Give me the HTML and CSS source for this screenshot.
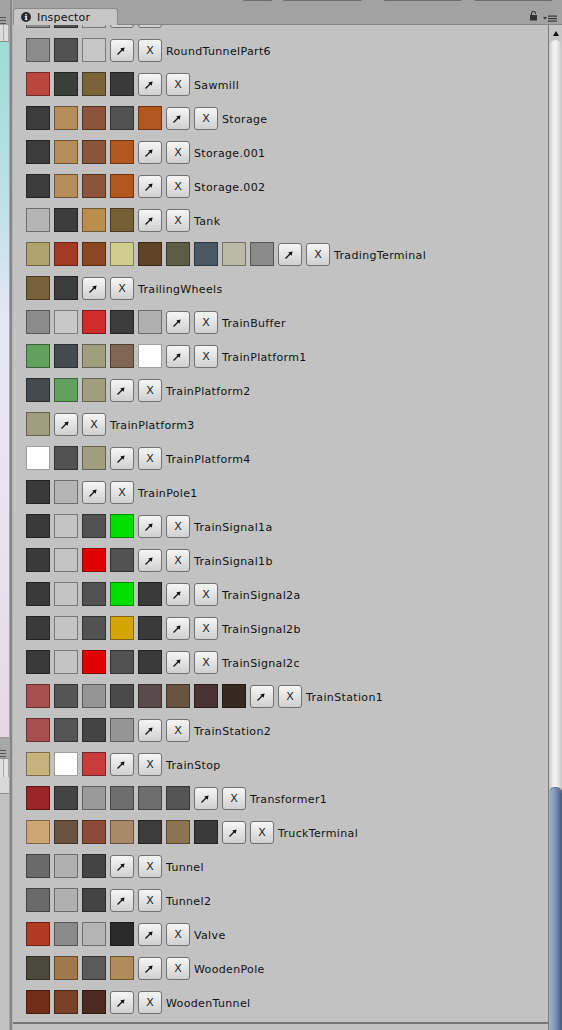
FILE: index.html
```html
<!DOCTYPE html>
<html>
<head>
<meta charset="utf-8">
<link rel="stylesheet" href="styles.css">
</head>
<body>
<div class="window">
  <div class="left-strip">
    <div class="ls-top"><span class="ls-menu"></span></div>
    <div class="ls-header"></div>
    <div class="ls-gradient"></div>
    <div class="ls-gap"><span class="ls-menu"></span></div>
    <div class="ls-header ls-header2"></div>
    <div class="ls-rest"></div>
  </div>
  <div class="separator"></div>
  <div class="right">
    <div class="topbar">
      <div class="tb-stubs">
        <span class="stub s1"></span><span class="stub s2"></span><span class="stub s3"></span><span class="stub s4"></span>
      </div>
      <div class="tab"><span class="info">i</span><span class="tab-label">Inspector</span></div>
      <div class="tb-icons">
        <svg class="lock" width="8" height="10" viewBox="0 0 8 10"><path d="M1.5 4 V2.5 A2 2 0 0 1 5.5 2.5 V3" fill="none" stroke="#333" stroke-width="1.1"/><rect x="0" y="4" width="7" height="5.5" fill="#333"/></svg>
        <svg class="menu" width="14" height="7" viewBox="0 0 14 7"><polygon points="0,2 4,2 2,4.5" fill="#333"/><rect x="5" y="0.5" width="9" height="1.2" fill="#333"/><rect x="5" y="3" width="9" height="1.2" fill="#333"/><rect x="5" y="5.5" width="9" height="1.2" fill="#333"/></svg>
      </div>
    </div>
    <div class="body-row">
      <div class="panel">
        <div class="viewport">
          <div class="list" id="list"></div>
        </div>
        <div class="footer"></div>
      </div>
      <div class="scrollbar">
        <div class="sb-up"><span class="tri"></span></div>
        <div class="sb-track"></div>
        <div class="sb-thumb"></div>
      </div>
    </div>
  </div>
</div>
<script src="app.js"></script>
</body>
</html>
```
FILE: styles.css
```css
html, body { margin: 0; padding: 0; }
body {
  width: 562px; height: 1030px; overflow: hidden;
  background: #a2a2a2;
  font-family: "DejaVu Sans", "Liberation Sans", sans-serif;
}
.window { display: flex; height: 1030px; }
.left-strip { width: 9px; display: flex; flex-direction: column; }
.ls-top { height: 25px; background: #a2a2a2; display: flex; align-items: flex-start; }
.ls-menu {
  display: block; width: 6px; height: 5px; margin-top: 17px;
  border-top: 1px solid #555; border-bottom: 1px solid #555;
  background: linear-gradient(#a2a2a2 2px, #555 2px, #555 3px, #a2a2a2 3px);
}
.ls-header {
  height: 16px; border-bottom: 1px solid #8e8e8e;
  background: linear-gradient(90deg, #dcdcdc 3px, #a8a8a8 3px, #a8a8a8 4px, #dcdcdc 4px, #dcdcdc 8px, #a8a8a8 8px);
}
.ls-gradient {
  height: 695px;
  background: linear-gradient(#9ddcd4, #c2e1e8 25%, #e6e7f4 40%, #ebe2f0 70%, #e6d7e7);
  border-bottom: 1px solid #9a9a9a;
}
.ls-gap { height: 20px; background: #a8a8a8; display: flex; }
.ls-gap .ls-menu { margin-top: 12px; background: linear-gradient(#a8a8a8 2px, #555 2px, #555 3px, #a8a8a8 3px); }
.ls-header2 {
  height: 34px; border-top: 1px solid #8a8a8a;
  background:
    linear-gradient(90deg, transparent 3px, #a8a8a8 3px, #a8a8a8 4px, transparent 4px, transparent 8px, #a8a8a8 8px) 0 0 / 9px 18px no-repeat,
    linear-gradient(#e2e2e2 0, #e2e2e2 18px, #d8d8d8 18px);
}
.ls-rest { flex: 1; background: #c2c2c2; }
.separator {
  width: 4px;
  background: linear-gradient(90deg, #a6a6a6 0, #a6a6a6 1px, #868686 1px, #868686 3px, #b4b4b4 3px);
}
.right { flex: 1; display: flex; flex-direction: column; }
.topbar {
  height: 24px; border-bottom: 1px solid #858585;
  display: flex; align-items: flex-end; justify-content: space-between;
  position: relative;
}
.tb-stubs { position: absolute; top: 0; left: 0; right: 0; height: 2px; }
.stub { position: absolute; top: 0; height: 1px; background: #6e6e6e; border-radius: 0 0 2px 2px; }
.s1 { left: 230px; width: 29px; }
.s2 { left: 270px; width: 79px; }
.s3 { left: 371px; width: 78px; }
.s4 { left: 461px; width: 78px; }
.tab {
  width: 96px; height: 16px;
  margin-bottom: -1px;
  background: #c6c6c6;
  border: 1px solid #8a8a8a; border-bottom: none;
  border-radius: 3px 3px 0 0;
  display: flex; align-items: center;
  padding-left: 7px; gap: 6px;
  position: relative;
}
.info {
  width: 10px; height: 10px; border-radius: 50%;
  background: #2b2b2b; color: #fff;
  font-size: 8px; font-weight: bold; line-height: 10px; text-align: center;
  font-family: "DejaVu Serif", serif;
}
.tab-label { font-size: 11px; color: #111; letter-spacing: 0.2px; }
.tb-icons { display: flex; align-items: flex-end; gap: 5px; margin-right: 5px; margin-bottom: 2px; }
.lock { display: block; margin-bottom: 1px; }
.menu { display: block; }
.body-row { flex: 1; display: flex; min-height: 0; }
.panel { flex: 1; display: flex; flex-direction: column; background: #c2c2c2; }
.viewport { height: 997px; overflow: hidden; }
.list { margin-top: -21px; display: flex; flex-direction: column; gap: 10px; padding-left: 13px; }
.row { display: flex; align-items: center; gap: 4px; height: 24px; }
.sw { width: 22px; height: 22px; border: 1px solid rgba(0,0,0,0.38); flex: none; }
.btn {
  width: 22px; height: 21px; flex: none;
  border: 1px solid #727272; border-radius: 3px;
  background: linear-gradient(#f6f6f6, #d0d0d0);
  display: flex; align-items: center; justify-content: center;
  font-size: 11px; color: #222;
}
.btn svg { display: block; }
.name { font-size: 11px; color: #111; padding-top: 2px; white-space: nowrap; letter-spacing: 0.35px; }
.footer { flex: 1; border-top: 2px solid #777; background: #c2c2c2; }
.scrollbar { width: 13px; border-left: 1px solid #7c7c7c; display: flex; flex-direction: column; background: #c6c6c6; }
.sb-up { height: 15px; display: flex; justify-content: center; align-items: flex-start; }
.tri {
  width: 0; height: 0; margin-top: 6px;
  border-left: 3.5px solid transparent; border-right: 3.5px solid transparent;
  border-bottom: 5px solid #111;
}
.sb-track {
  height: 747px;
  border-radius: 7px 7px 0 0;
  background: linear-gradient(90deg, #c4c4c4, #eeeeee 30%, #f2f2f2 55%, #d6d6d6 85%, #c0c0c0);
}
.sb-thumb {
  flex: 1;
  border-radius: 6px 6px 0 0;
  background: linear-gradient(90deg, #9fb1cd, #8a9ebf 35%, #6c83a9 65%, #44587c);
  border-top: 1px solid #5a6f93;
}
```
FILE: app.js
```js
var rows = [
  ["", ["#8c8c8c","#505050","#c6c6c6"]],
  ["RoundTunnelPart6", ["#8c8c8c","#525252","#c6c6c6"]],
  ["Sawmill", ["#b9473d","#3c3e3b","#7a6339","#3a3a3a"]],
  ["Storage", ["#3c3c3c","#b68c58","#8a553b","#525252","#b4561f"]],
  ["Storage.001", ["#3c3c3c","#b68c58","#8a553b","#b4561f"]],
  ["Storage.002", ["#3c3c3c","#b68c58","#8a553b","#b4561f"]],
  ["Tank", ["#b4b4b4","#3c3c3c","#bb8e4e","#756036"]],
  ["TradingTerminal", ["#b0a36c","#a33a22","#8c4621","#cfcd8c","#5e4326","#5d5c45","#4b5960","#bbbaa8","#8a8a8a"]],
  ["TrailingWheels", ["#78603a","#3a3d3b"]],
  ["TrainBuffer", ["#8c8c8c","#c8c8c8","#cf2c2c","#3c3c3c","#b0b0b0"]],
  ["TrainPlatform1", ["#62a060","#454a4e","#a19e7e","#826555","#ffffff"]],
  ["TrainPlatform2", ["#454a4e","#62a060","#a19e7e"]],
  ["TrainPlatform3", ["#a19e7e"]],
  ["TrainPlatform4", ["#ffffff","#525252","#a19e7e"]],
  ["TrainPole1", ["#3a3a3a","#b4b4b4"]],
  ["TrainSignal1a", ["#3a3a3a","#c4c4c4","#525252","#00e000"]],
  ["TrainSignal1b", ["#3a3a3a","#c4c4c4","#e00000","#525252"]],
  ["TrainSignal2a", ["#3a3a3a","#c4c4c4","#525252","#00e000","#3a3a3a"]],
  ["TrainSignal2b", ["#3a3a3a","#c4c4c4","#525252","#d4a400","#3a3a3a"]],
  ["TrainSignal2c", ["#3a3a3a","#c4c4c4","#e00000","#525252","#3a3a3a"]],
  ["TrainStation1", ["#a64e50","#555555","#959595","#4a4a4a","#574b4b","#685440","#4a3233","#342a22"]],
  ["TrainStation2", ["#a64e50","#555555","#444444","#959595"]],
  ["TrainStop", ["#c8b27e","#ffffff","#c83c3c"]],
  ["Transformer1", ["#9a2528","#444444","#9a9a9a","#6e6e6e","#6e6e6e","#555555"]],
  ["TruckTerminal", ["#cfa574","#6a5240","#8c4a38","#a88a68","#3c3c3c","#8c7452","#3a3a3a"]],
  ["Tunnel", ["#6a6a6a","#b0b0b0","#444444"]],
  ["Tunnel2", ["#6a6a6a","#b0b0b0","#444444"]],
  ["Valve", ["#b03a22","#8a8a8a","#b4b4b4","#2a2a2a"]],
  ["WoodenPole", ["#4c4a3c","#a2784a","#5a5a5a","#b08a58"]],
  ["WoodenTunnel", ["#722e18","#7a4026","#4c2a20"]]
];
var arrow = '<svg width="22" height="21" viewBox="0 0 22 21"><path d="M6.5 14.5 L11.5 9.5" stroke="#111" stroke-width="1.3" fill="none"/><polygon points="13.6,7.4 9.2,8.4 12.6,11.8" fill="#111"/></svg>';
var list = document.getElementById("list");
var html = "";
rows.forEach(function (r) {
  html += '<div class="row">';
  r[1].forEach(function (c) { html += '<span class="sw" style="background:' + c + '"></span>'; });
  html += '<span class="btn">' + arrow + '</span><span class="btn">' + (r[0] ? 'X' : '') + '</span>';
  if (r[0]) html += '<span class="name">' + r[0] + '</span>';
  html += '</div>';
});
list.innerHTML = html;
```
